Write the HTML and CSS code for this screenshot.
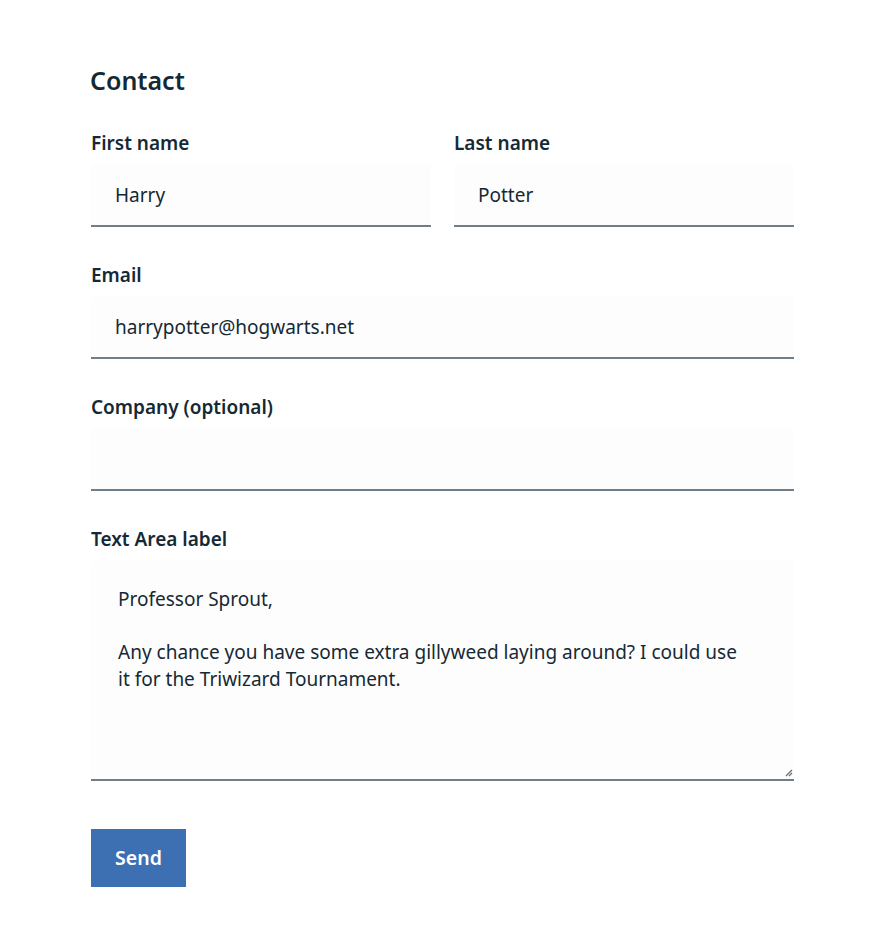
FILE: index.html
```html
<!DOCTYPE html>
<html lang="en">
<head>
<meta charset="utf-8">
<title>Contact</title>
<link rel="stylesheet" href="styles.css">
</head>
<body>
<main class="page">
  <h1 class="title">Contact</h1>
  <form class="form">
    <div class="row two">
      <div class="field">
        <div class="label">First name</div>
        <div class="input">Harry</div>
      </div>
      <div class="field">
        <div class="label">Last name</div>
        <div class="input">Potter</div>
      </div>
    </div>
    <div class="row">
      <div class="field">
        <div class="label">Email</div>
        <div class="input">harrypotter@hogwarts.net</div>
      </div>
    </div>
    <div class="row">
      <div class="field">
        <div class="label">Company (optional)</div>
        <div class="input"></div>
      </div>
    </div>
    <div class="row">
      <div class="field">
        <div class="label">Text Area label</div>
        <div class="textarea">
          <p>Professor Sprout,</p>
          <p>Any chance you have some extra gillyweed laying around? I could use it for the Triwizard Tournament.</p>
          <svg class="grip" width="10" height="10" viewBox="0 0 10 10"><path d="M9 3 L3 9 M9 6 L6 9" stroke="#6b6b6b" stroke-width="1.2" fill="none"/></svg>
        </div>
      </div>
    </div>
    <div class="button">Send</div>
  </form>
</main>
</body>
</html>
```

FILE: styles.css
```css
* { box-sizing: border-box; }
html, body { margin: 0; padding: 0; background: #ffffff; }
body {
  font-family: "Noto Sans", "Open Sans", sans-serif;
  color: #152935;
}
.page {
  width: 885px;
  padding: 64px 91px 0 91px;
}
.title {
  margin: 0 0 35px -1px;
  font-size: 25px;
  line-height: 32px;
  font-weight: 600;
  color: #152935;
}
.form {
  display: flex;
  flex-direction: column;
}
.row {
  display: flex;
  gap: 23px;
  margin-bottom: 36px;
}
.field {
  flex: 1;
  display: flex;
  flex-direction: column;
}
.label {
  font-size: 19px;
  line-height: 24px;
  font-weight: 600;
  margin-bottom: 10px;
  color: #152935;
}
.input {
  height: 62px;
  background: #fdfdfd;
  border-bottom: 2px solid #6f7e89;
  padding: 0 24px;
  font-size: 19px;
  line-height: 60px;
  color: #152935;
}
.textarea {
  position: relative;
  height: 220px;
  background: #fdfdfd;
  border-bottom: 2px solid #6f7e89;
  padding: 25px 48px 0 27px;
  font-size: 19px;
  line-height: 26.5px;
  color: #152935;
}
.textarea p { margin: 0 0 26.5px 0; }
.grip {
  position: absolute;
  right: 1px;
  bottom: 2px;
}
.button {
  align-self: flex-start;
  margin-top: 12px;
  width: 95px;
  height: 58px;
  background: #3d70b2;
  color: #ffffff;
  font-size: 19.5px;
  font-weight: 600;
  line-height: 58px;
  text-align: center;
}
```
